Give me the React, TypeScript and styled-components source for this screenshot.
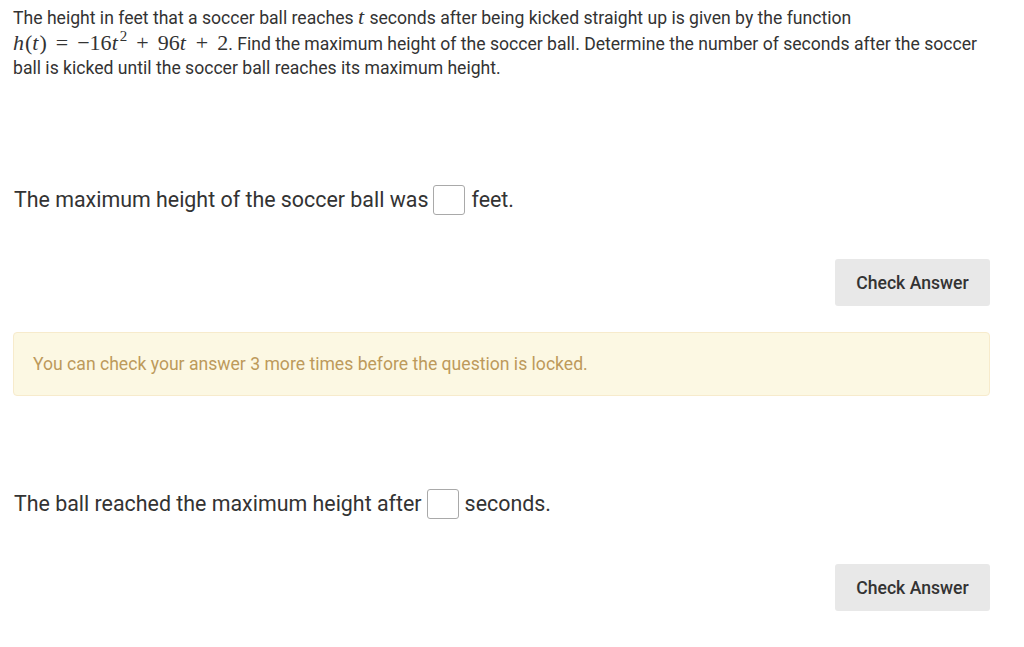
import React from "react";
import styled, { createGlobalStyle } from "styled-components";

const Global = createGlobalStyle`
  html, body { margin: 0; padding: 0; background: #ffffff; }
  body { font-family: Roboto, "Liberation Sans", Arial, sans-serif; color: #333333; }
`;

const Page = styled.div`
  padding: 6px 34px 0 13px;
  display: flex;
  flex-direction: column;
`;

const Prompt = styled.p`
  margin: 0;
  font-size: 17.6px;
  line-height: 24px;
`;

const MathLine = styled.span`
  display: inline-block;
  line-height: 24px;
  padding-top: 2px;
`;

const Math = styled.span`
  font-family: "Liberation Serif", "DejaVu Serif", serif;
  font-size: 22px;
  line-height: 1;
`;

const Var = styled.i`
  font-family: "Liberation Serif", "DejaVu Serif", serif;
  font-style: italic;
  margin-right: 1px;
`;

const Op = styled.span<{ $gap?: number }>`
  margin: 0 ${(p) => p.$gap ?? 5}px;
`;

const Sup = styled.sup`
  font-size: 15px;
  line-height: 0;
  vertical-align: 9px;
  margin-left: 1px;
`;

const Sentence = styled.p<{ $top: number }>`
  margin: ${(p) => p.$top}px 0 0 1px;
  font-size: 21.4px;
  line-height: 30px;
  display: flex;
  align-items: center;
  gap: 5px;
`;

const Blank = styled.input`
  width: 32px;
  height: 30px;
  box-sizing: border-box;
  border: 1px solid #a9a9a9;
  border-radius: 3px;
  background: #fff;
  padding: 0;
  margin: 0 1px 0 0;
`;

const ButtonRow = styled.div<{ $top: number }>`
  display: flex;
  justify-content: flex-end;
  margin-top: ${(p) => p.$top}px;
`;

const CheckButton = styled.button`
  width: 155px;
  height: 47px;
  border: none;
  border-radius: 3px;
  background: #e8e8e8;
  color: #333333;
  font-family: Roboto, "Liberation Sans", Arial, sans-serif;
  font-size: 17.6px;
  font-weight: 500;
  cursor: pointer;
`;

const Alert = styled.div`
  margin-top: 26px;
  height: 64px;
  box-sizing: border-box;
  padding: 0 19px;
  display: flex;
  align-items: center;
  background: #fcf8e3;
  border: 1px solid #f7ebcc;
  border-radius: 4px;
  color: #bd9a5b;
  font-size: 17.6px;
`;

export default function App() {
  return (
    <>
      <Global />
      <Page>
        <Prompt>
          The height in feet that a soccer ball reaches <Math><Var>t</Var></Math> seconds after being
          kicked straight up is given by the function
          <br />
          <MathLine>
            <Math>
              <Var>h</Var>(<Var>t</Var>)<Op $gap={9}>=</Op>−16<Var>t</Var>
              <Sup>2</Sup>
              <Op $gap={9}>+</Op>96<Var>t</Var>
              <Op $gap={9}>+</Op>2
            </Math>
            . Find the maximum height of the soccer ball. Determine the number of seconds after the soccer
          </MathLine>
          <br />
          ball is kicked until the soccer ball reaches its maximum height.
        </Prompt>

        <Sentence $top={105}>
          The maximum height of the soccer ball was <Blank aria-label="maximum height" /> feet.
        </Sentence>
        <ButtonRow $top={44}>
          <CheckButton>Check Answer</CheckButton>
        </ButtonRow>

        <Alert>You can check your answer 3 more times before the question is locked.</Alert>

        <Sentence $top={93}>
          The ball reached the maximum height after <Blank aria-label="seconds" /> seconds.
        </Sentence>
        <ButtonRow $top={45}>
          <CheckButton>Check Answer</CheckButton>
        </ButtonRow>
      </Page>
    </>
  );
}
